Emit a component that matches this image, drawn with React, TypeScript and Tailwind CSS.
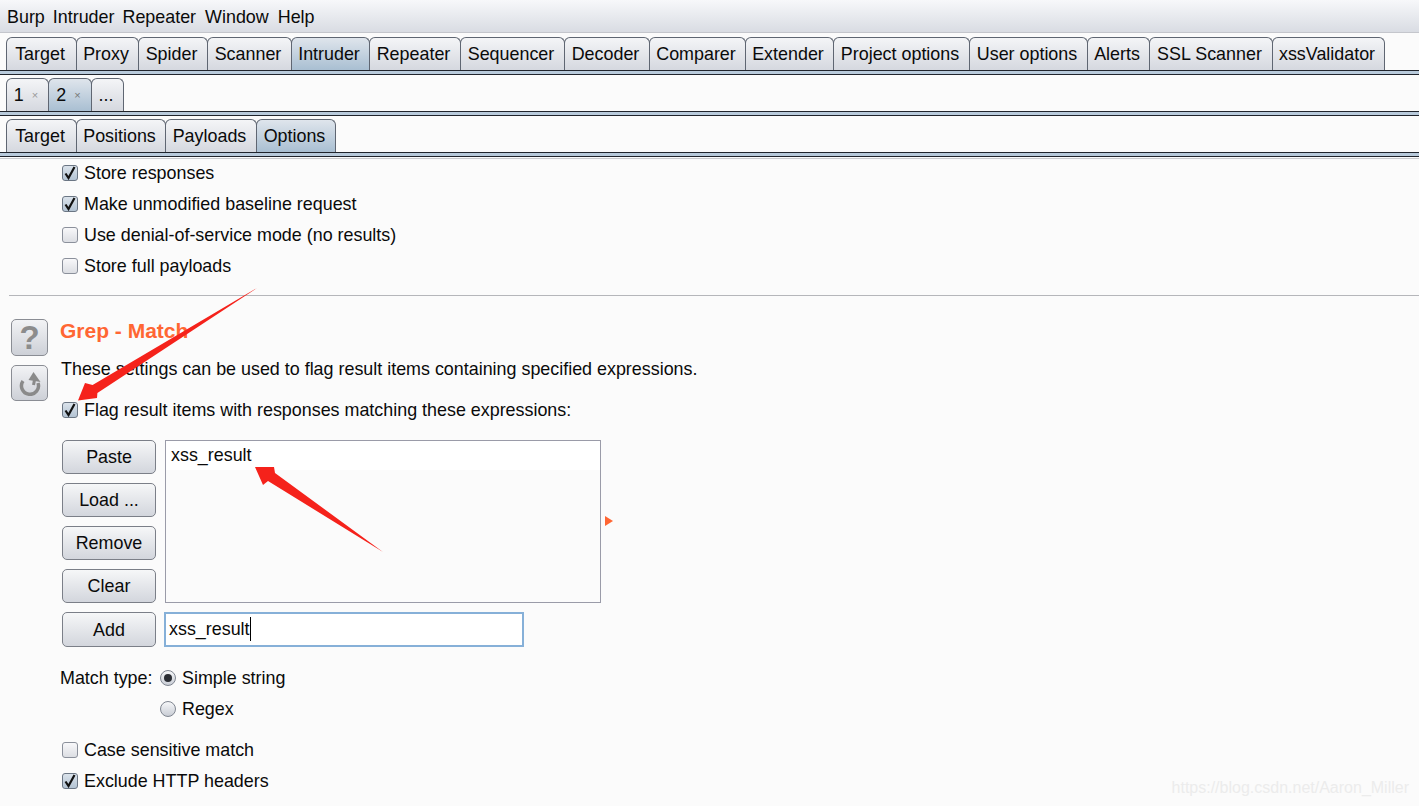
import React from "react";

const topTabs = [
  ["Target", 71],
  ["Proxy", 63],
  ["Spider", 70],
  ["Scanner", 85],
  ["Intruder", 79],
  ["Repeater", 92],
  ["Sequencer", 105],
  ["Decoder", 86],
  ["Comparer", 97],
  ["Extender", 89],
  ["Project options", 137],
  ["User options", 119],
  ["Alerts", 63],
  ["SSL Scanner", 124],
  ["xssValidator", 113],
] as const;

const subTabs = [
  ["Target", 71],
  ["Positions", 90],
  ["Payloads", 92],
  ["Options", 80],
] as const;

function Tab({ children, width, active }: { children: React.ReactNode; width: number; active?: boolean }) {
  return (
    <div
      className={`h-[33px] -mr-px pr-[3px] pb-px flex items-center justify-center rounded-t-[6px] border border-b-0 border-[#5f6672] ${
        active
          ? "bg-gradient-to-b from-[#dfe5ec] to-[#a9bfd2]"
          : "bg-gradient-to-b from-[#f4f5f7] to-[#d5d8df]"
      }`}
      style={{ width }}
    >
      {children}
    </div>
  );
}

function TabLine() {
  return <div className="h-[5px] border-y border-[#20242c] bg-[#b8cadb]" />;
}

function Check({ checked }: { checked?: boolean }) {
  return (
    <span
      className={`w-[16px] h-[16px] shrink-0 rounded-[3px] border flex items-center justify-center ${
        checked
          ? "border-[#6b7684] bg-gradient-to-b from-[#dbe3eb] to-[#b3c3d3]"
          : "border-[#8b909b] bg-gradient-to-b from-[#f8f8fa] to-[#dcdee3]"
      }`}
    >
      {checked && (
        <svg width="14" height="14" viewBox="0 0 14 14">
          <path d="M2.5 7.5 L5.5 12 L11.5 1" fill="none" stroke="#111" strokeWidth="2.2" />
        </svg>
      )}
    </span>
  );
}

function CheckRow({ label, checked, className }: { label: string; checked?: boolean; className?: string }) {
  return (
    <div className={`h-[20px] flex items-center gap-[6px] ${className ?? ""}`}>
      <Check checked={checked} />
      <span>{label}</span>
    </div>
  );
}

function Radio({ checked }: { checked?: boolean }) {
  return (
    <span className="w-[16px] h-[16px] shrink-0 rounded-full border border-[#7f8590] bg-gradient-to-b from-[#f6f7f9] to-[#c9cdd5] flex items-center justify-center">
      {checked && <span className="w-[8px] h-[8px] rounded-full bg-[#2a2d33]" />}
    </span>
  );
}

function Btn({ label, className }: { label: string; className?: string }) {
  return (
    <div
      className={`w-[94px] flex items-center justify-center rounded-[5px] border border-[#7b7f88] bg-gradient-to-b from-[#f6f7f8] to-[#d3d6dd] ${className ?? ""}`}
    >
      {label}
    </div>
  );
}

function SideButton({ children, className }: { children: React.ReactNode; className?: string }) {
  return (
    <div
      className={`w-[37px] flex items-center justify-center rounded-[5px] border border-[#8a8d94] bg-gradient-to-b from-[#f2f3f5] to-[#cdd0d7] ${className ?? ""}`}
    >
      {children}
    </div>
  );
}

export default function App() {
  return (
    <div
      className="relative w-[1419px] h-[806px] overflow-hidden bg-[#fbfbfb] text-[17.9px] leading-[20px] text-[#0a0a0a]"
      style={{ fontFamily: '"Liberation Sans", Arial, sans-serif' }}
    >
      {/* menu */}
      <div className="h-[33px] pl-[7px] pt-[2px] flex items-center gap-[8px] border-b border-[#c4c6cc] bg-gradient-to-b from-[#f7f8fa] to-[#d9dce3]">
        <span>Burp</span>
        <span>Intruder</span>
        <span>Repeater</span>
        <span className="ml-px">Window</span>
        <span className="ml-px">Help</span>
      </div>

      {/* main tabs */}
      <div className="flex pl-[6px] pt-[4px]">
        {topTabs.map(([label, w]) => (
          <Tab key={label} width={w} active={label === "Intruder"}>
            {label}
          </Tab>
        ))}
      </div>
      <TabLine />

      {/* request tabs */}
      <div className="flex pl-[6px] pt-[3px]">
        <Tab width={43}>
          <span className="flex items-center gap-[8px]">
            1<span className="text-[11px] text-[#999]">×</span>
          </span>
        </Tab>
        <Tab width={44} active>
          <span className="flex items-center gap-[8px]">
            2<span className="text-[11px] text-[#777]">×</span>
          </span>
        </Tab>
        <Tab width={33}>...</Tab>
      </div>
      <TabLine />

      {/* intruder tabs */}
      <div className="flex pl-[6px] pt-[3px]">
        {subTabs.map(([label, w]) => (
          <Tab key={label} width={w} active={label === "Options"}>
            {label}
          </Tab>
        ))}
      </div>
      <TabLine />
      <div className="h-px mt-px bg-[#c9cacd]" />

      {/* top options */}
      <div className="pl-[62px] pt-[4px] flex flex-col gap-[11px]">
        <CheckRow label="Store responses" checked />
        <CheckRow label="Make unmodified baseline request" checked />
        <CheckRow label="Use denial-of-service mode (no results)" />
        <CheckRow label="Store full payloads" />
      </div>

      <div className="h-px ml-[9px] mt-[19px] bg-[#b5b6ba]" />

      {/* grep match */}
      <div className="flex pl-[11px] pt-[23px]">
        <div className="w-[49px] shrink-0 flex flex-col gap-[9px]">
          <SideButton className="h-[37px]">
            <span className="text-[33px] font-bold text-[#8c8c8c] leading-none">?</span>
          </SideButton>
          <SideButton className="h-[36px]">
            <svg width="24" height="26" viewBox="0 0 24 26">
              <path d="M5 11 A8.5 8.5 0 1 0 20 13" fill="none" stroke="#8a8a8a" strokeWidth="3.5" />
              <polygon points="15.5,2 22.5,12 10.5,10" fill="#8a8a8a" />
              <path d="M16.5 10 L15.5 15" fill="none" stroke="#8a8a8a" strokeWidth="3" />
            </svg>
          </SideButton>
        </div>
        <div className="flex-1">
          <div className="h-[24px] flex items-center text-[21px] font-bold text-[#ff6633]">Grep - Match</div>
          <div className="mt-[16px] ml-px h-[20px]">
            These settings can be used to flag result items containing specified expressions.
          </div>
          <CheckRow className="mt-[21px] ml-[2px]" label="Flag result items with responses matching these expressions:" checked />

          <div className="mt-[20px] ml-[2px] flex gap-[9px]">
            <div className="flex flex-col">
              <Btn label="Paste" className="h-[34px]" />
              <Btn label="Load ..." className="h-[34px] mt-[9px]" />
              <Btn label="Remove" className="h-[34px] mt-[9px]" />
              <Btn label="Clear" className="h-[34px] mt-[9px]" />
            </div>
            <div className="w-[436px] h-[163px] border border-[#9a9ba8] bg-[#fbfbfb]">
              <div className="h-[29px] pl-[5px] pb-[2px] flex items-center bg-white">xss_result</div>
            </div>
            <div className="ml-[-5px] mt-[76px] w-0 h-0 border-y-[5px] border-l-[8px] border-y-transparent border-l-[#ff6633]" />
          </div>

          <div className="mt-[9px] ml-[2px] flex gap-[8px]">
            <Btn label="Add" className="h-[35px]" />
            <div className="w-[360px] h-[35px] pl-[3px] pb-[2px] flex items-center border-2 border-[#86b0d8] bg-white">
              <span className="border-r border-black leading-[24px]">xss_result</span>
            </div>
          </div>

          <div className="mt-[21px] h-[20px] flex items-center">
            <span className="w-[100px]">Match type:</span>
            <span className="flex items-center gap-[6px]">
              <Radio checked />
              Simple string
            </span>
          </div>
          <div className="mt-[11px] h-[20px] pl-[100px] flex items-center gap-[6px]">
            <Radio />
            Regex
          </div>

          <CheckRow className="mt-[21px] ml-[2px]" label="Case sensitive match" />
          <CheckRow className="mt-[11px] ml-[2px]" label="Exclude HTTP headers" checked />
        </div>
      </div>

      {/* annotation arrows */}
      <svg className="absolute inset-0 pointer-events-none" width="1419" height="806">
        <polygon points="257,288 97.4,393 97,398 78,400.5 85,383 92.6,385" fill="#f5221b" />
        <polygon points="383,552 275,473 274,467 255,467 263,485 268,481" fill="#f5221b" />
      </svg>

      {/* watermark */}
      <div className="absolute right-[10px] top-[778px] text-[16px] text-[#ececec]">
        https://blog.csdn.net/Aaron_Miller
      </div>
    </div>
  );
}
